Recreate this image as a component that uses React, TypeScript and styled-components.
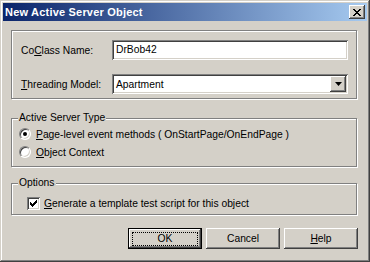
import React from "react";
import styled, { createGlobalStyle } from "styled-components";

const GlobalStyle = createGlobalStyle`
  body {
    margin: 0;
    font-family: "Liberation Sans", Arial, sans-serif;
    font-size: 10.3px;
    color: #000;
  }
`;

const raised = `
  box-shadow: inset -1px -1px #404040, inset 1px 1px #fff,
    inset -2px -2px #808080, inset 2px 2px #d4d0c8;
`;

const sunken = `
  box-shadow: inset 1px 1px #808080, inset -1px -1px #fff,
    inset 2px 2px #404040, inset -2px -2px #d4d0c8;
`;

const Window = styled.div`
  width: 370px;
  height: 262px;
  box-sizing: border-box;
  padding: 3px;
  background: #d4d0c8;
  box-shadow: inset -1px -1px #404040, inset 1px 1px #d4d0c8,
    inset -2px -2px #808080, inset 2px 2px #fff;
  display: flex;
  flex-direction: column;
`;

const TitleBar = styled.div`
  height: 18px;
  flex-shrink: 0;
  display: flex;
  align-items: center;
  justify-content: space-between;
  padding: 0 2px;
  background: linear-gradient(to right, #0a246a, #a6caf0);
`;

const TitleText = styled.span`
  color: #fff;
  font-weight: bold;
  font-size: 11px;
  letter-spacing: 0.2px;
`;

const CloseButton = styled.div`
  width: 16px;
  height: 14px;
  background: #d4d0c8;
  display: flex;
  align-items: center;
  justify-content: center;
  ${raised}
`;

const Body = styled.div`
  flex: 1;
  display: flex;
  flex-direction: column;
  padding: 9px 10px 0 8px;
`;

const etched = `
  border: 1px solid #808080;
  box-shadow: inset 1px 1px #fff, 1px 1px #fff;
`;

const FieldsBox = styled.div`
  height: 69px;
  box-sizing: border-box;
  ${etched}
  display: grid;
  grid-template-columns: 91px 1fr;
  align-items: center;
  align-content: start;
  row-gap: 14px;
  padding: 9px 8px 0 9px;
`;

const Label = styled.label`
  font-size: 10.3px;
`;

const TextField = styled.div`
  height: 20px;
  box-sizing: border-box;
  background: #fff;
  ${sunken}
  padding: 0 4px;
  line-height: 20px;
`;

const SelectField = styled.div`
  height: 20px;
  box-sizing: border-box;
  background: #fff;
  ${sunken}
  padding: 2px;
  display: flex;
  align-items: center;
`;

const SelectValue = styled.span`
  flex: 1;
  padding-left: 2px;
`;

const DropButton = styled.div`
  width: 16px;
  height: 16px;
  background: #d4d0c8;
  display: flex;
  align-items: center;
  justify-content: center;
  ${raised}
`;

const Group = styled.fieldset<{ $top: number }>`
  margin: ${(p) => p.$top}px 0 0 0;
  padding: 0;
  min-width: 0;
  ${etched}
`;

const Legend = styled.legend`
  margin-left: 6px;
  padding: 0 1px;
  line-height: 14px;
  font-size: 10.3px;
  background: #d4d0c8;
`;

const GroupContent = styled.div<{ $pad: string }>`
  display: flex;
  flex-direction: column;
  padding: ${(p) => p.$pad};
`;

const OptionRow = styled.div<{ $h: number; $gap: number }>`
  height: ${(p) => p.$h}px;
  display: flex;
  align-items: center;
  gap: ${(p) => p.$gap}px;
`;

const Radio = styled.span<{ $checked?: boolean }>`
  width: 12px;
  height: 12px;
  box-sizing: border-box;
  border-radius: 50%;
  background: #fff;
  border: 1px solid;
  border-color: #808080 #fff #fff #808080;
  box-shadow: inset 1px 1px #404040, inset -1px -1px #d4d0c8;
  display: flex;
  align-items: center;
  justify-content: center;
  &::after {
    content: "";
    width: 4px;
    height: 4px;
    border-radius: 50%;
    background: ${(p) => (p.$checked ? "#000" : "transparent")};
  }
`;

const CheckBox = styled.span`
  width: 13px;
  height: 13px;
  box-sizing: border-box;
  background: #fff;
  ${sunken}
  display: flex;
  align-items: center;
  justify-content: center;
`;

const ButtonRow = styled.div`
  display: flex;
  justify-content: flex-end;
  gap: 4px;
  margin-top: 13px;
  margin-right: -1px;
`;

const Button = styled.div<{ $default?: boolean }>`
  width: 74px;
  height: 21px;
  box-sizing: border-box;
  background: #d4d0c8;
  display: flex;
  align-items: center;
  justify-content: center;
  ${(p) =>
    p.$default
      ? `
    border: 1px solid #000;
    box-shadow: inset -1px -1px #404040, inset 1px 1px #fff,
      inset -2px -2px #808080;
  `
      : raised}
`;

const FocusRect = styled.span`
  width: 66px;
  height: 14px;
  box-sizing: border-box;
  border: 1px dotted #000;
  display: flex;
  align-items: center;
  justify-content: center;
`;

const App: React.FC = () => {
  return (
    <>
      <GlobalStyle />
      <Window>
        <TitleBar>
          <TitleText>New Active Server Object</TitleText>
          <CloseButton>
            <svg width="8" height="7" viewBox="0 0 8 7">
              <path
                d="M0 0h2v1h1v1h2V1h1V0h2v1H7v1H6v1H5v1h1v1h1v1h1v1H6V6H5V5H3v1H2v1H0V6h1V5h1V4h1V3H2V2H1V1H0z"
                fill="#000"
              />
            </svg>
          </CloseButton>
        </TitleBar>
        <Body>
          <FieldsBox>
            <Label>
              Co<u>C</u>lass Name:
            </Label>
            <TextField>DrBob42</TextField>
            <Label>
              <u>T</u>hreading Model:
            </Label>
            <SelectField>
              <SelectValue>Apartment</SelectValue>
              <DropButton>
                <svg width="7" height="4" viewBox="0 0 7 4">
                  <path d="M0 0h7L3.5 4z" fill="#000" />
                </svg>
              </DropButton>
            </SelectField>
          </FieldsBox>

          <Group $top={12}>
            <Legend>Active Server Type</Legend>
            <GroupContent $pad="0 0 5px 7px">
              <OptionRow $h={18} $gap={5}>
                <Radio $checked />
                <span>
                  <u>P</u>age-level event methods ( OnStartPage/OnEndPage )
                </span>
              </OptionRow>
              <OptionRow $h={18} $gap={5}>
                <Radio />
                <span>
                  <u>O</u>bject Context
                </span>
              </OptionRow>
            </GroupContent>
          </Group>

          <Group $top={9}>
            <Legend>Options</Legend>
            <GroupContent $pad="4px 0 2px 15px">
              <OptionRow $h={18} $gap={4}>
                <CheckBox>
                  <svg width="7" height="7" viewBox="0 0 7 7">
                    <path
                      d="M6 0h1v3H6v1H5v1H4v1H3v1H2V6H1V5H0V2h1v1h1v1h1V3h1V2h1V1h1z"
                      fill="#000"
                    />
                  </svg>
                </CheckBox>
                <span>
                  <u>G</u>enerate a template test script for this object
                </span>
              </OptionRow>
            </GroupContent>
          </Group>

          <ButtonRow>
            <Button $default>
              <FocusRect>OK</FocusRect>
            </Button>
            <Button>Cancel</Button>
            <Button>
              <span>
                <u>H</u>elp
              </span>
            </Button>
          </ButtonRow>
        </Body>
      </Window>
    </>
  );
};

export default App;
